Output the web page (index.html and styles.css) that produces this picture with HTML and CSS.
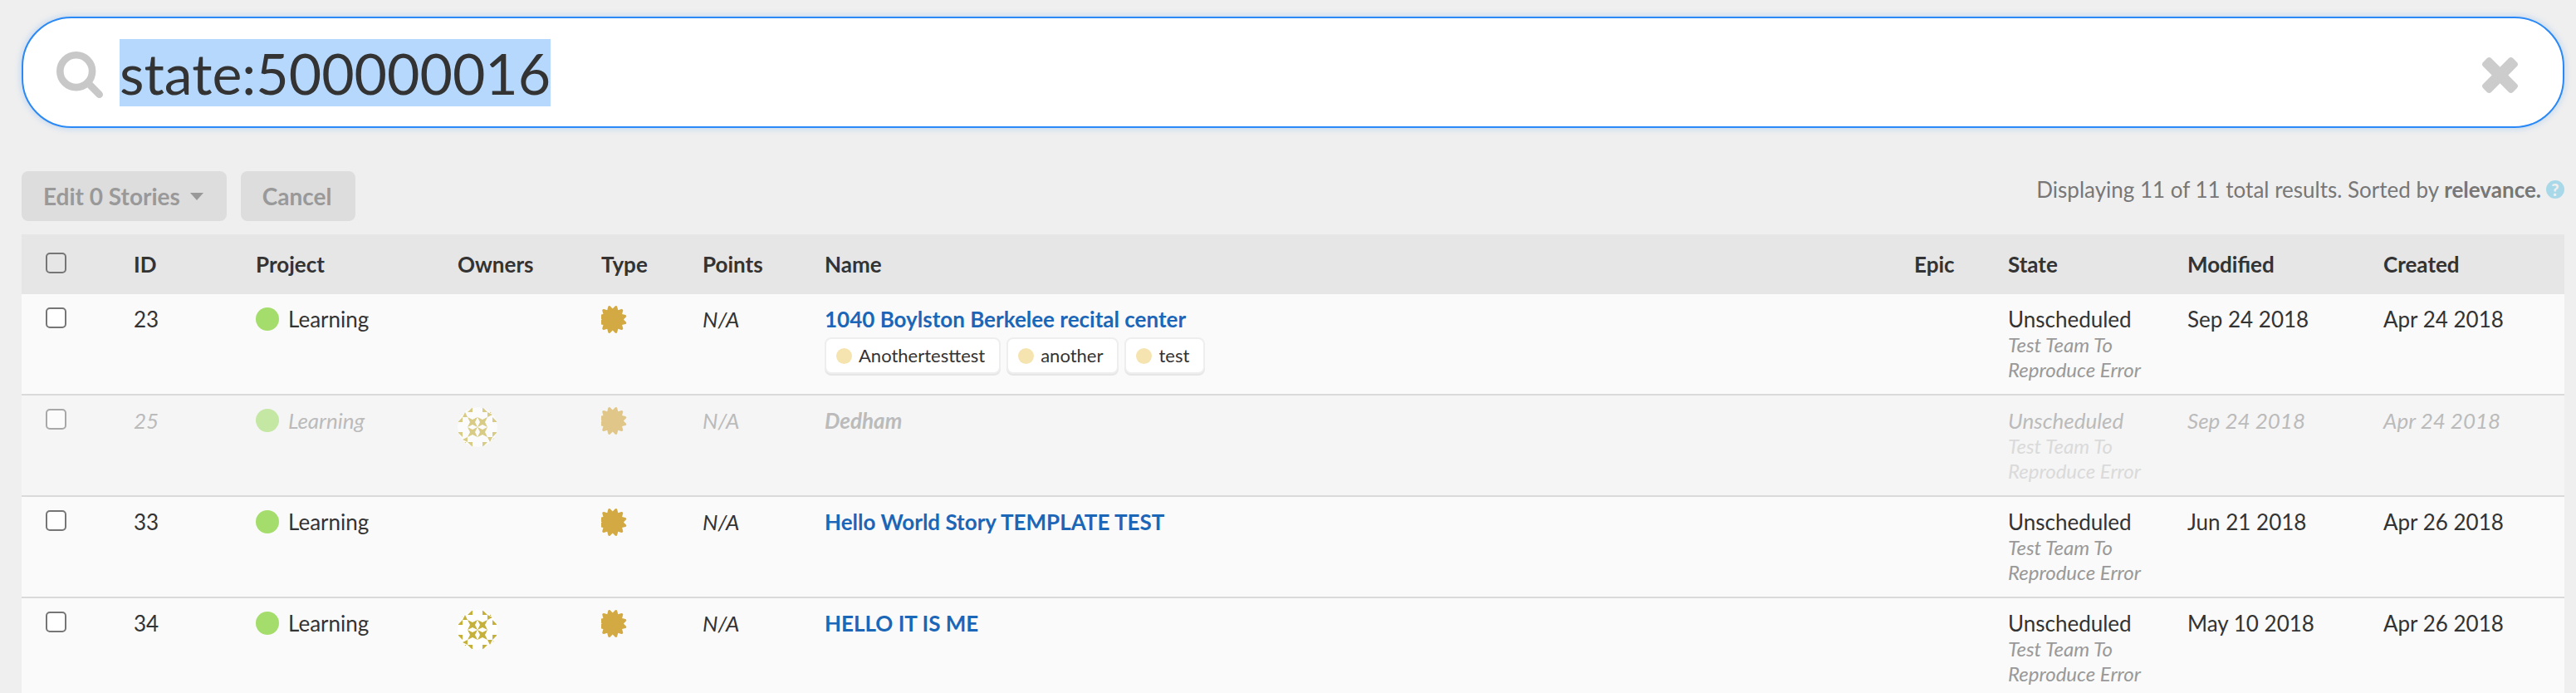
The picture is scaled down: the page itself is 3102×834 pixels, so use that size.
FILE: index.html
```html
<!DOCTYPE html>
<html lang="en">
<head>
    <meta charset="UTF-8">
    <meta name="viewport" content="width=device-width, initial-scale=1.0">
    <title>Search Stories</title>
    <link rel="stylesheet" href="styles.css">
</head>
<body>
    <!-- shared icons -->
    <svg class="sprite" aria-hidden="true">
        <symbol id="icon-search" viewBox="0 0 1664 1664">
            <circle cx="704" cy="704" r="576" fill="none" stroke="#c8c8c8" stroke-width="256"/>
            <path d="M1103 1284L1284 1103L1627 1446Q1664 1483 1664 1536Q1664 1588 1626 1626T1536 1664Q1482 1664 1446 1626z"/>
        </symbol>
        <symbol id="icon-times" viewBox="302 366 1188 1188">
            <path d="M1490 1322q0 40-28 68l-136 136q-28 28-68 28t-68-28l-294-294-294 294q-28 28-68 28t-68-28l-136-136q-28-28-28-68t28-68l294-294-294-294q-28-28-28-68t28-68l136-136q28-28 68-28t68 28l294 294 294-294q28-28 68-28t68 28l136 136q28 28 28 68t-28 68l-294 294 294 294q28 28 28 68z"/>
        </symbol>
        <symbol id="icon-feature" viewBox="128 128 1536 1536">
            <path d="M1376 896l138 135q30 28 20 70-12 41-52 51l-188 48 53 186q12 41-19 70-29 31-70 19l-186-53-48 188q-10 40-51 52-12 2-19 2-31 0-51-22l-135-138-135 138q-28 30-70 20-41-11-51-52l-48-188-186 53q-41 12-70-19-31-29-19-70l53-186-188-48q-40-10-52-51-10-42 20-70l138-135-138-135q-30-28-20-70 12-41 52-51l188-48-53-186q-12-41 19-70 29-31 70-19l186 53 48-188q10-41 51-51 41-12 70 19l135 139 135-139q29-30 70-19 41 10 51 51l48 188 186-53q41-12 70 19 31 29 19 70l-53 186 188 48q40 10 52 51 10 42-20 70z"/>
        </symbol>
        <symbol id="avatar" viewBox="0 0 48 48">
            <circle cx="24" cy="24" r="24" fill="#fff"/>
            <path d="M12 6L18 0V6zM30 0L36 6H30zM0 18L6 12V18zM0 30H6V36zM42 12L48 18H42zM42 30H48L42 36zM12 42H18V48zM30 42H36L30 48z"/>
            <path d="M6 12L9 6L12 12zM36 6L42 9L36 12zM36 36H42L39 42zM12 36V42L6 39zM4 9L6 7V9zM39 5L41 7H39zM42 39L44 37V39zM8 42H10V44z"/>
            <path d="M12 12L18 15L24 12L21 18L24 24L18 21L12 24L15 18z"/>
            <path d="M24 12L30 15L36 12L33 18L36 24L30 21L24 24L27 18z"/>
            <path d="M12 24L18 27L24 24L21 30L24 36L18 33L12 36L15 30z"/>
            <path d="M24 24L30 27L36 24L33 30L36 36L30 33L24 36L27 30z"/>
        </symbol>
    </svg>

    <form class="search-box" onsubmit="return false">
        <svg class="search-icon" aria-hidden="true"><use href="#icon-search"/></svg>
        <input type="text" id="searchInput" class="search-input" aria-label="Search" value="state:500000016" spellcheck="false" autocomplete="off">
        <button type="button" id="clearBtn" class="clear-btn" aria-label="Clear search">
            <svg class="clear-icon" aria-hidden="true"><use href="#icon-times"/></svg>
        </button>
    </form>

    <div class="toolbar">
        <div class="actions">
            <button type="button" class="btn" disabled>Edit 0 Stories <span class="caret"></span></button>
            <button type="button" class="btn" disabled>Cancel</button>
        </div>
        <div class="summary">
            <span>Displaying 11 of 11 total results. Sorted by <strong>relevance.</strong></span>
            <a href="#" class="help">?</a>
        </div>
    </div>

    <table class="stories">
        <colgroup>
            <col class="col-check">
            <col class="col-id">
            <col class="col-project">
            <col class="col-owners">
            <col class="col-type">
            <col class="col-points">
            <col class="col-name">
            <col class="col-epic">
            <col class="col-state">
            <col class="col-modified">
            <col class="col-created">
        </colgroup>
        <thead>
            <tr>
                <th><input type="checkbox" class="check" aria-label="Select all stories"></th>
                <th>ID</th>
                <th>Project</th>
                <th>Owners</th>
                <th>Type</th>
                <th>Points</th>
                <th>Name</th>
                <th>Epic</th>
                <th>State</th>
                <th>Modified</th>
                <th>Created</th>
            </tr>
        </thead>
        <tbody>
            <tr>
                <td><input type="checkbox" class="check" aria-label="Select story 23"></td>
                <td>23</td>
                <td><div class="project"><span class="dot"></span>Learning</div></td>
                <td></td>
                <td><svg class="type-icon" aria-hidden="true"><use href="#icon-feature"/></svg></td>
                <td><em>N/A</em></td>
                <td>
                    <a href="#" class="story-name">1040 Boylston Berkelee recital center</a>
                    <div class="labels">
                        <span class="label">Anothertesttest</span>
                        <span class="label">another</span>
                        <span class="label">test</span>
                    </div>
                </td>
                <td></td>
                <td>Unscheduled<div class="workflow">Test Team To Reproduce Error</div></td>
                <td>Sep 24 2018</td>
                <td>Apr 24 2018</td>
            </tr>
            <tr class="archived">
                <td><input type="checkbox" class="check" aria-label="Select story 25"></td>
                <td>25</td>
                <td><div class="project"><span class="dot"></span>Learning</div></td>
                <td><svg class="avatar" aria-hidden="true"><use href="#avatar"/></svg></td>
                <td><svg class="type-icon" aria-hidden="true"><use href="#icon-feature"/></svg></td>
                <td><em>N/A</em></td>
                <td><a href="#" class="story-name">Dedham</a></td>
                <td></td>
                <td>Unscheduled<div class="workflow">Test Team To Reproduce Error</div></td>
                <td>Sep 24 2018</td>
                <td>Apr 24 2018</td>
            </tr>
            <tr>
                <td><input type="checkbox" class="check" aria-label="Select story 33"></td>
                <td>33</td>
                <td><div class="project"><span class="dot"></span>Learning</div></td>
                <td></td>
                <td><svg class="type-icon" aria-hidden="true"><use href="#icon-feature"/></svg></td>
                <td><em>N/A</em></td>
                <td><a href="#" class="story-name">Hello World Story TEMPLATE TEST</a></td>
                <td></td>
                <td>Unscheduled<div class="workflow">Test Team To Reproduce Error</div></td>
                <td>Jun 21 2018</td>
                <td>Apr 26 2018</td>
            </tr>
            <tr>
                <td><input type="checkbox" class="check" aria-label="Select story 34"></td>
                <td>34</td>
                <td><div class="project"><span class="dot"></span>Learning</div></td>
                <td><svg class="avatar" aria-hidden="true"><use href="#avatar"/></svg></td>
                <td><svg class="type-icon" aria-hidden="true"><use href="#icon-feature"/></svg></td>
                <td><em>N/A</em></td>
                <td><a href="#" class="story-name">HELLO IT IS ME</a></td>
                <td></td>
                <td>Unscheduled<div class="workflow">Test Team To Reproduce Error</div></td>
                <td>May 10 2018</td>
                <td>Apr 26 2018</td>
            </tr>
        </tbody>
    </table>

    <script>
        const searchInput = document.getElementById('searchInput');

        // start with the query selected so it can be typed over
        searchInput.focus();
        searchInput.select();

        document.getElementById('clearBtn').addEventListener('click', function() {
            searchInput.value = '';
            searchInput.focus();
        });
    </script>
</body>
</html>
```

FILE: styles.css
```css
* {
    box-sizing: border-box;
}
body {
    height: 100vh;
    margin: 0;
    padding: 20px 14px 0 26px;
    overflow: hidden;
    background-color: #efefef;
    color: #333;
    font-family: Lato, "Liberation Sans", sans-serif;
    font-size: 26px;
    line-height: 32px;
}
.sprite {
    display: none;
}

/* search box */
.search-box {
    display: flex;
    align-items: center;
    height: 134px;
    padding: 0 54px 0 40px;
    background-color: #fff;
    border: 2px solid #2a89f6;
    border-radius: 60px;
    box-shadow: 0 0 8px rgba(42, 137, 246, 0.3);
}
.search-icon {
    width: 56px;
    height: 56px;
    margin-top: 6px;
    fill: #c8c8c8;
}
.search-input {
    flex: 1;
    min-width: 0;
    margin: 0 20px;
    padding: 0;
    border: none;
    outline: none;
    background: none;
    color: #333;
    font-family: inherit;
    font-size: 68px;
}
.search-input::selection {
    background-color: #b6d8fc;
    color: #333;
}
.clear-btn {
    display: flex;
    margin-top: 6px;
    padding: 0;
    border: none;
    background: none;
    cursor: pointer;
}
.clear-icon {
    width: 43px;
    height: 43px;
    fill: #ccc;
}

/* toolbar */
.toolbar {
    display: flex;
    justify-content: space-between;
    align-items: flex-start;
    margin: 52px 0 16px;
}
.actions {
    display: flex;
    gap: 17px;
}
.btn {
    display: flex;
    align-items: center;
    gap: 12px;
    height: 60px;
    padding: 0 28px 0 26px;
    border: none;
    border-radius: 8px;
    background-color: #ddd;
    color: #999;
    font-family: inherit;
    font-size: 28px;
    font-weight: bold;
}
.caret {
    border: 8px solid transparent;
    border-top: 9px solid #999;
    border-bottom: none;
}
.summary {
    display: flex;
    align-items: center;
    gap: 6px;
    padding-top: 6px;
    color: #777;
}
.help {
    width: 22px;
    height: 22px;
    border-radius: 50%;
    background-color: #a9d9e8;
    color: #efefef;
    font-size: 20px;
    font-weight: 900;
    line-height: 22px;
    text-align: center;
    text-decoration: none;
}

/* stories table */
.stories {
    width: 100%;
    table-layout: fixed;
    border-collapse: separate;
    border-spacing: 0;
}
.col-check { width: 107px; }
.col-id { width: 147px; }
.col-project { width: 243px; }
.col-owners { width: 173px; }
.col-type { width: 122px; }
.col-points { width: 147px; }
.col-epic { width: 113px; }
.col-state { width: 216px; }
.col-modified { width: 236px; }
.col-created { width: 246px; }
.stories th {
    padding: 20px 0 20px 28px;
    background-color: #e6e6e6;
    text-align: left;
    vertical-align: top;
}
.stories td {
    padding: 14px 0 14px 28px;
    background-color: #fafafa;
    border-bottom: 2px solid #dadada;
    vertical-align: top;
}
.check {
    display: block;
    appearance: none;
    width: 25px;
    height: 25px;
    margin: 2px 0 0 1px;
    border: 2px solid #767676;
    border-radius: 5px;
    background-color: #fff;
}
th .check {
    background-color: transparent;
}
.project {
    display: flex;
    align-items: center;
    gap: 11px;
}
.dot {
    width: 28px;
    height: 28px;
    border-radius: 50%;
    background-color: #a4dd6c;
}
.avatar {
    display: block;
    width: 48px;
    height: 48px;
    border-radius: 50%;
    fill: #c5b03c;
}
.type-icon {
    display: block;
    width: 33px;
    height: 33px;
    fill: #d3a943;
}
.story-name {
    display: block;
    color: #1c66b8;
    font-weight: bold;
    text-decoration: none;
}
.labels {
    display: flex;
    gap: 7px;
    padding-top: 6px;
}
.label {
    display: flex;
    align-items: center;
    gap: 8px;
    height: 44px;
    padding: 0 17px 0 12px;
    border: 2px solid #eee;
    border-radius: 8px;
    background-color: #fff;
    box-shadow: 0 2px 0 #e6e6e6;
    font-size: 22px;
}
.label::before {
    content: "";
    width: 19px;
    height: 19px;
    border-radius: 50%;
    background-color: #f5e4b0;
}
.workflow {
    color: #999;
    font-size: 24px;
    font-style: italic;
    line-height: 30px;
}

/* archived stories are greyed out */
.archived td {
    background-color: #f5f5f5;
    color: #bbb;
    font-style: italic;
}
.archived .story-name {
    color: #bbb;
}
.archived .workflow {
    color: #dadada;
}
.archived .check,
.archived .dot,
.archived .avatar,
.archived .type-icon {
    opacity: 0.6;
}
```
